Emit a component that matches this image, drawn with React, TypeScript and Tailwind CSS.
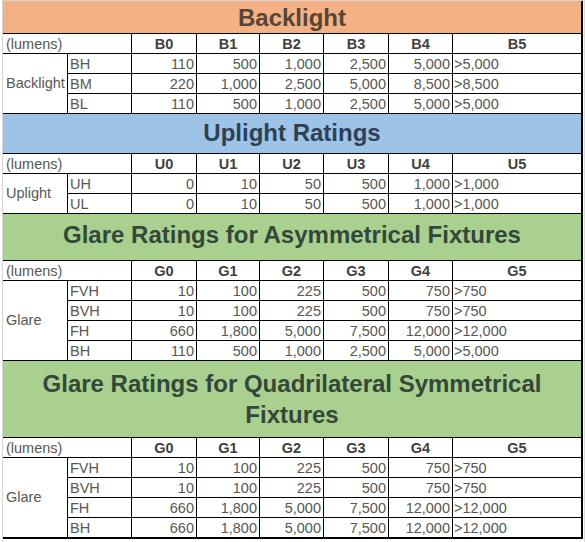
import React from "react";

type Section = {
  title: string;
  bg: string;
  titleColor: string;
  heightClass: string;
  padClass: string;
  leadingClass: string;
  prefix: string;
  label: string;
  rows: { name: string; vals: string[] }[];
};

const sections: Section[] = [
  {
    title: "Backlight",
    bg: "bg-[#f4b183]",
    titleColor: "text-[#574538]",
    heightClass: "h-[33px]",
    padClass: "pt-[4px]",
    leadingClass: "leading-[26px]",
    prefix: "B",
    label: "Backlight",
    rows: [
      { name: "BH", vals: ["110", "500", "1,000", "2,500", "5,000", ">5,000"] },
      { name: "BM", vals: ["220", "1,000", "2,500", "5,000", "8,500", ">8,500"] },
      { name: "BL", vals: ["110", "500", "1,000", "2,500", "5,000", ">5,000"] },
    ],
  },
  {
    title: "Uplight Ratings",
    bg: "bg-[#9dc3e6]",
    titleColor: "text-[#2e4154]",
    heightClass: "h-[40px]",
    padClass: "pt-[6px]",
    leadingClass: "leading-[26px]",
    prefix: "U",
    label: "Uplight",
    rows: [
      { name: "UH", vals: ["0", "10", "50", "500", "1,000", ">1,000"] },
      { name: "UL", vals: ["0", "10", "50", "500", "1,000", ">1,000"] },
    ],
  },
  {
    title: "Glare Ratings for Asymmetrical Fixtures",
    bg: "bg-[#a9d08e]",
    titleColor: "text-[#33483a]",
    heightClass: "h-[47px]",
    padClass: "pt-[8px]",
    leadingClass: "leading-[26px]",
    prefix: "G",
    label: "Glare",
    rows: [
      { name: "FVH", vals: ["10", "100", "225", "500", "750", ">750"] },
      { name: "BVH", vals: ["10", "100", "225", "500", "750", ">750"] },
      { name: "FH", vals: ["660", "1,800", "5,000", "7,500", "12,000", ">12,000"] },
      { name: "BH", vals: ["110", "500", "1,000", "2,500", "5,000", ">5,000"] },
    ],
  },
  {
    title: "Glare Ratings for Quadrilateral Symmetrical Fixtures",
    bg: "bg-[#a9d08e]",
    titleColor: "text-[#33483a]",
    heightClass: "h-[77px]",
    padClass: "pt-[7px]",
    leadingClass: "leading-[31px]",
    prefix: "G",
    label: "Glare",
    rows: [
      { name: "FVH", vals: ["10", "100", "225", "500", "750", ">750"] },
      { name: "BVH", vals: ["10", "100", "225", "500", "750", ">750"] },
      { name: "FH", vals: ["660", "1,800", "5,000", "7,500", "12,000", ">12,000"] },
      { name: "BH", vals: ["660", "1,800", "5,000", "7,500", "12,000", ">12,000"] },
    ],
  },
];

const cell = "h-[20px] border-b border-black pt-[3px] leading-[15px] whitespace-nowrap overflow-hidden";

function SectionBlock({ s }: { s: Section }) {
  const rowSpan =
    s.rows.length === 2 ? "row-span-2" : s.rows.length === 3 ? "row-span-3" : "row-span-4";
  return (
    <div>
      <div
        className={`${s.heightClass} ${s.bg} ${s.padClass} border-b border-black text-center font-bold text-[24px] ${s.leadingClass} ${s.titleColor}`}
      >
        {s.title}
      </div>
      <div className="grid grid-cols-[65px_64px_65px_63px_64px_65px_64px_128px] text-[14.5px] text-[#575757]">
        <div className={`${cell} col-span-2 border-r pl-[3px]`}>(lumens)</div>
        {[0, 1, 2, 3, 4].map((i) => (
          <div key={i} className={`${cell} border-r text-center font-bold text-[#404040]`}>
            {s.prefix}
            {i}
          </div>
        ))}
        <div className={`${cell} text-center font-bold text-[#404040]`}>{s.prefix}5</div>
        <div
          className={`${rowSpan} col-start-1 row-start-2 flex items-center border-b border-r border-black pl-[3px] leading-[15px]`}
        >
          {s.label}
        </div>
        {s.rows.map((r) => (
          <React.Fragment key={r.name}>
            <div className={`${cell} col-start-2 border-r pl-[2px]`}>{r.name}</div>
            {r.vals.slice(0, 5).map((v, i) => (
              <div key={i} className={`${cell} border-r pr-[2px] text-right`}>
                {v}
              </div>
            ))}
            <div className={`${cell} pl-[1px]`}>{r.vals[5]}</div>
          </React.Fragment>
        ))}
      </div>
    </div>
  );
}

export default function App() {
  return (
    <div className="w-[585px] h-[542px] bg-white overflow-hidden font-['Liberation_Sans',Arial,sans-serif]">
      <div className="flex">
        <div className="w-[2px]" />
        <div className="w-[581px] border-t border-l border-[#d4d4d4]">
          <div className="border-r-2 border-b border-black">
            {sections.map((s) => (
              <SectionBlock key={s.title} s={s} />
            ))}
          </div>
        </div>
        <div className="w-[2px] border-r border-[#dadada] h-[542px]" />
      </div>
    </div>
  );
}
